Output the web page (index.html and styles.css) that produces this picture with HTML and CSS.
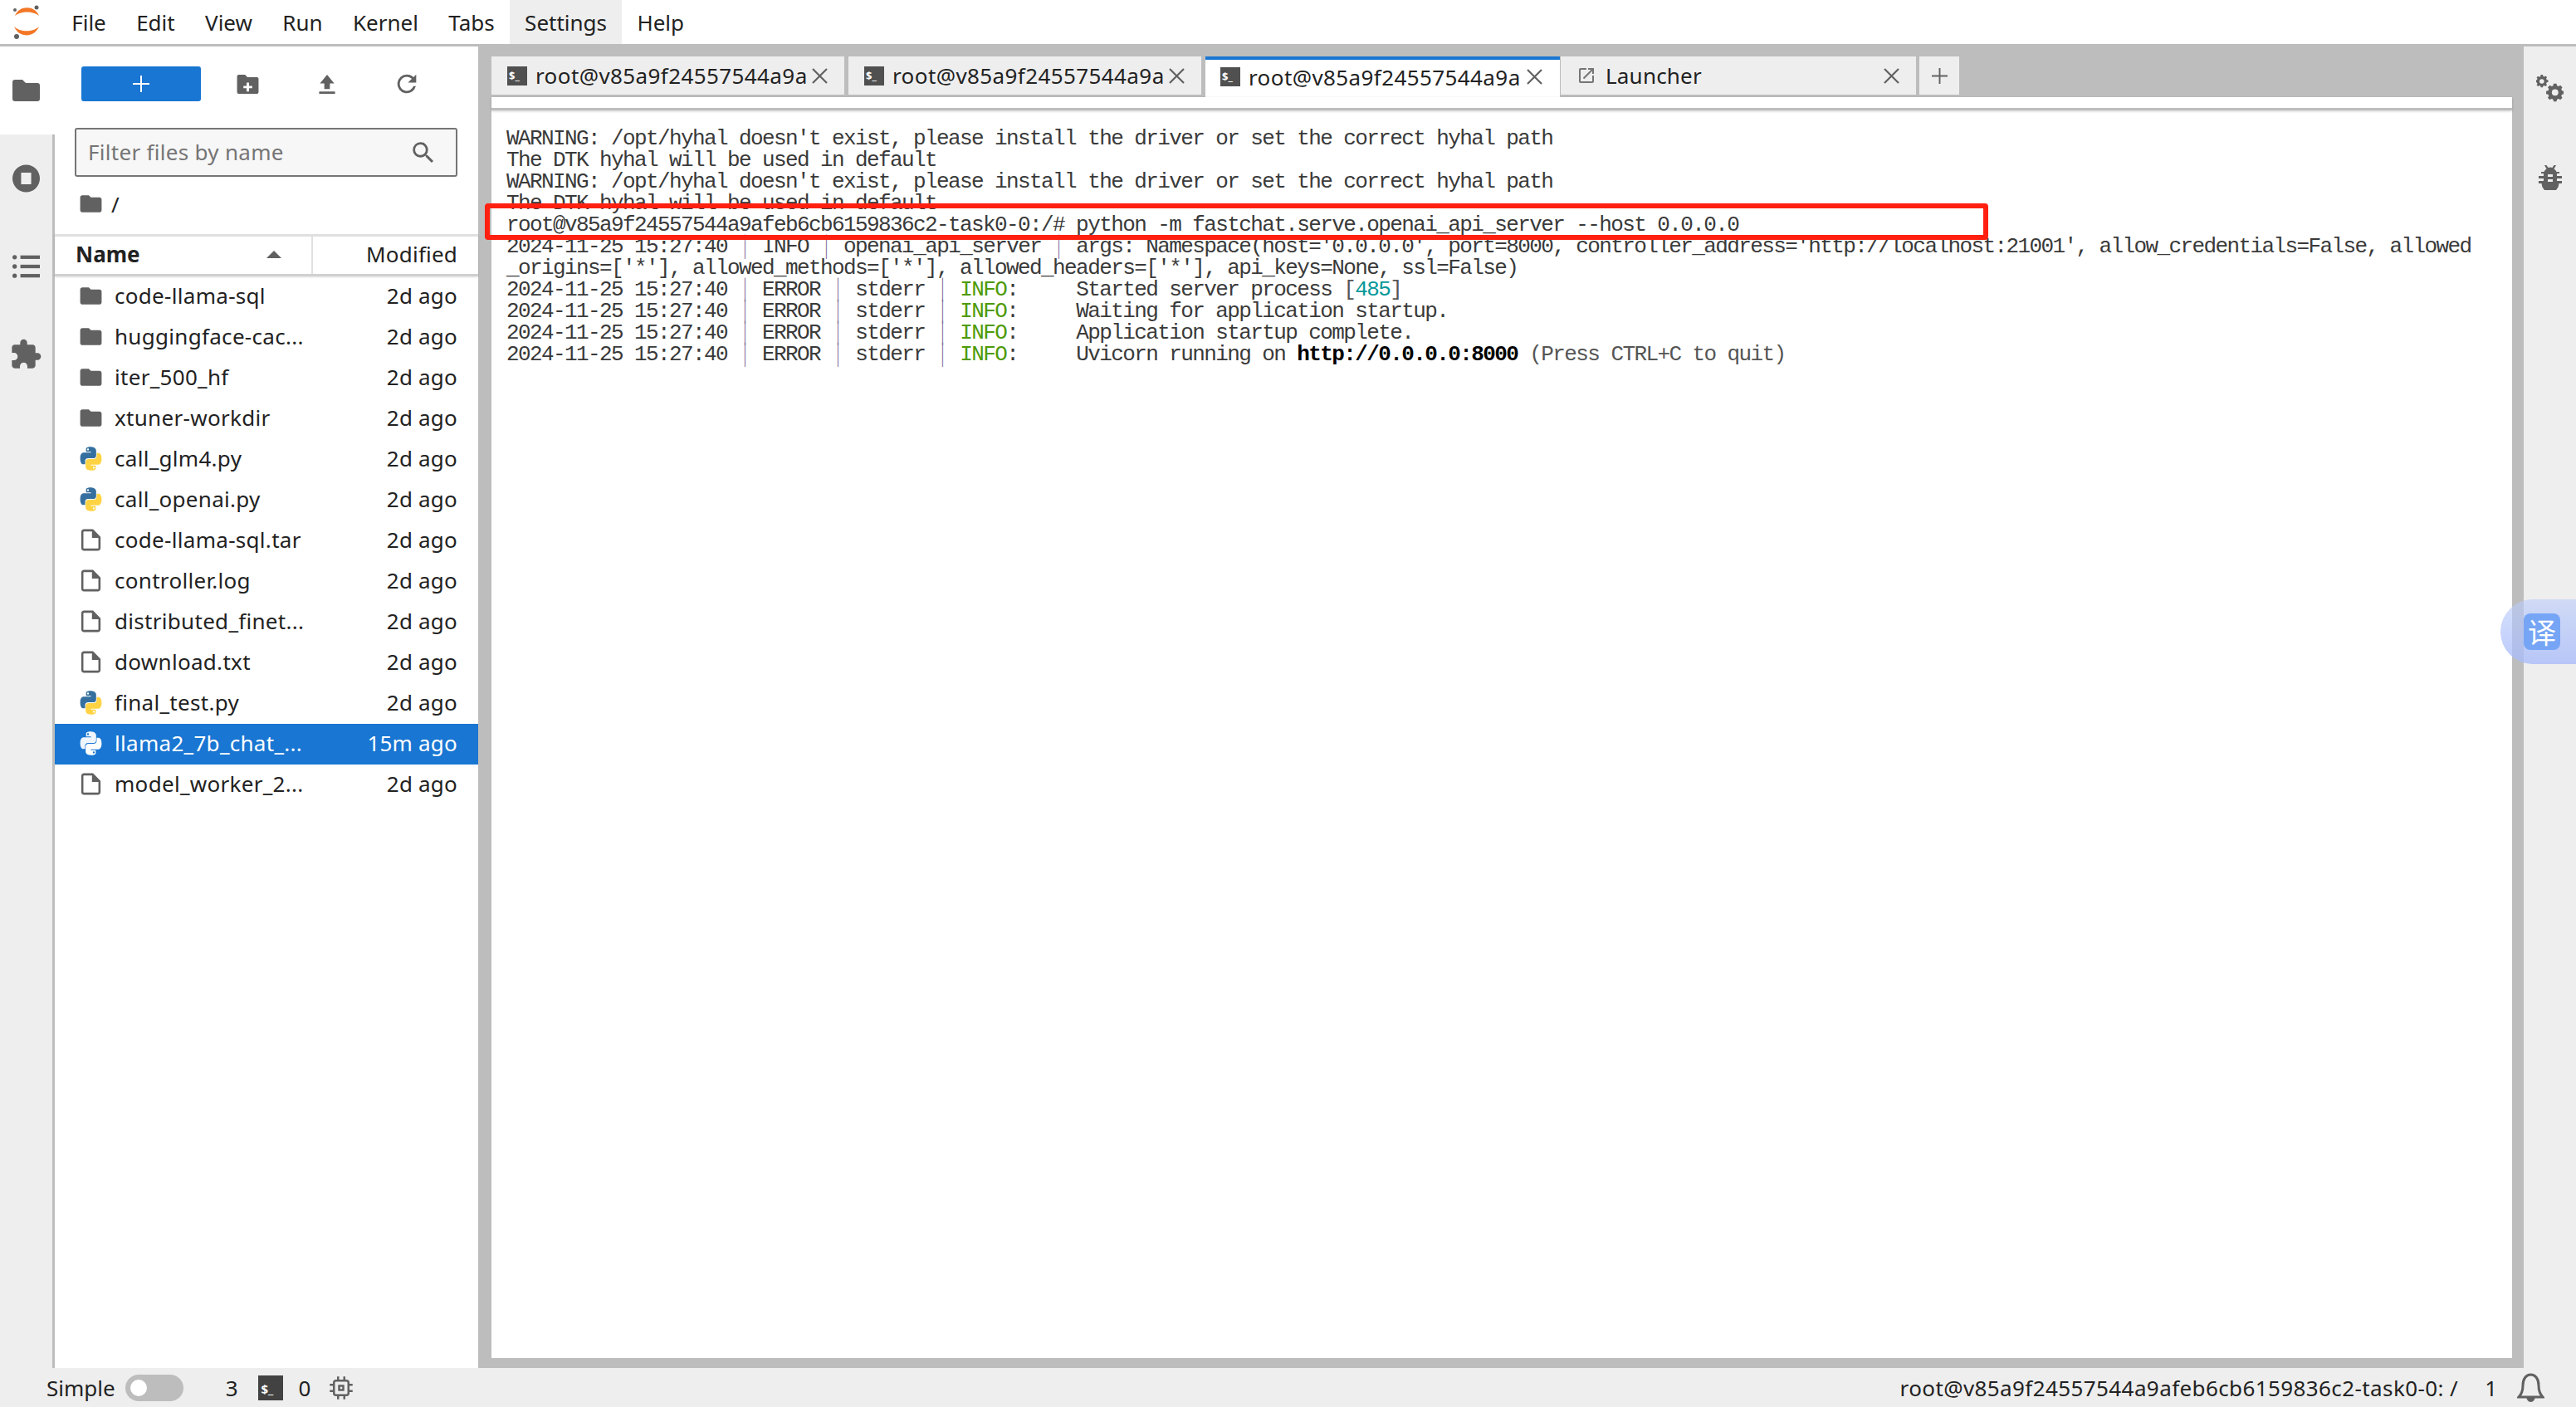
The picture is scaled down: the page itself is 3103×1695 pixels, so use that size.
FILE: index.html
```html
<!DOCTYPE html>
<html lang="en">
<head>
<meta charset="utf-8">
<title>JupyterLab</title>
<link rel="stylesheet" href="styles.css">
</head>
<body>
<svg class="defs" width="0" height="0" aria-hidden="true">
  <defs>
    <symbol id="i-folder" viewBox="0 0 24 24"><path d="M10 4H4c-1.100 0-2 .9-2 2v12c0 1.100.9 2 2 2h16c1.100 0 2-.9 2-2V8c0-1.100-.9-2-2-2h-8l-2-2z"/></symbol>
    <symbol id="i-file" viewBox="0 0 24 24"><path fill-rule="evenodd" d="M14 2H5.500C4.100 2 3 3.100 3 4.500v15C3 20.900 4.100 22 5.500 22h13c1.400 0 2.500-1.100 2.500-2.500V9l-7-7zm-8.500 18c-.3 0-.5-.2-.5-.5v-15c0-.3.200-.5.500-.5H13v6h6v9.500c0 .3-.2.500-.5.500h-13z"/></symbol>
    <symbol id="i-x" viewBox="0 0 19 19"><path d="M1 1l17 17M18 1L1 18"/></symbol>
    <symbol id="i-py" viewBox="0 0 24 24">
      <path class="py-a" d="M11.900 1C7.200 1 7.500 3 7.500 3v2.700h4.600v.7H5.300S2 6 2 11.800c0 5.700 2.900 5.500 2.900 5.500h1.700v-2.700s-.1-2.900 2.800-2.900h4.800s2.700 0 2.700-2.600V4.500S16.800 1 11.900 1zM9.300 2.600a.9.900 0 1 1 0 1.800.9.900 0 0 1 0-1.800z"/>
      <path class="py-b" d="M12.100 23c4.700 0 4.400-2 4.400-2v-2.700h-4.600v-.7h6.800s3.300.4 3.300-5.400c0-5.700-2.900-5.500-2.900-5.500h-1.700v2.700s.1 2.900-2.800 2.900H9.800s-2.700 0-2.700 2.600v4.400S6.700 23 12.100 23zm2.600-1.600a.9.9 0 1 1 0-1.800.9.9 0 0 1 0 1.800z"/>
    </symbol>
  </defs>
</svg>

<div class="app">
  <header class="topbar">
    <svg class="logo" viewBox="0 0 38 46">
      <path class="logo-arc" d="M5 16C10 3 29 3 34 16 27 10 12 10 5 16z"/>
      <path class="logo-arc" d="M4 29C10 43 28 43 34 29 27 36 11 36 4 29z"/>
      <circle class="logo-dot" cx="31" cy="6" r="2.500"/>
      <circle class="logo-dot" cx="5" cy="9" r="2"/>
      <circle class="logo-dot" cx="7" cy="41" r="3"/>
    </svg>
    <nav class="menu">
      <span class="menu-item">File</span>
      <span class="menu-item">Edit</span>
      <span class="menu-item">View</span>
      <span class="menu-item">Run</span>
      <span class="menu-item">Kernel</span>
      <span class="menu-item">Tabs</span>
      <span class="menu-item menu-active">Settings</span>
      <span class="menu-item">Help</span>
    </nav>
  </header>

  <div class="workspace">
    <aside class="rail">
      <div class="rail-tab rail-current">
        <svg class="rail-icon" viewBox="0 0 33 26"><path d="M3 0h9l4 4h14a3 3 0 0 1 3 3v16a3 3 0 0 1-3 3H3a3 3 0 0 1-3-3V3a3 3 0 0 1 3-3z"/></svg>
      </div>
      <div class="rail-tab">
        <svg class="rail-icon" viewBox="0 0 38 38"><path fill-rule="evenodd" d="M19 0a19 19 0 1 1 0 38 19 19 0 0 1 0-38zM12 11.500v15c0 .3.200.5.500.5h13c.3 0 .5-.2.500-.5v-15c0-.3-.2-.5-.5-.5h-13c-.3 0-.5.200-.5.500z"/></svg>
      </div>
      <div class="rail-tab">
        <svg class="rail-icon" viewBox="0 0 31 27"><circle cx="2.500" cy="3" r="2.500"/><circle cx="2.500" cy="13.500" r="2.500"/><circle cx="2.500" cy="24" r="2.500"/><rect x="9" y="1" width="22" height="4"/><rect x="9" y="11.500" width="22" height="4"/><rect x="9" y="22" width="22" height="4"/></svg>
      </div>
      <div class="rail-tab">
        <svg class="rail-icon rail-puzzle" viewBox="0 0 24 24"><path d="M20.500 11H19V7c0-1.100-.9-2-2-2h-4V3.500a2.500 2.500 0 0 0-5 0V5H4c-1.100 0-2 .9-2 2v3.800h1.500c1.500 0 2.700 1.200 2.700 2.700S5 16.200 3.500 16.200H2V20c0 1.100.9 2 2 2h3.800v-1.500c0-1.500 1.200-2.700 2.700-2.700s2.700 1.200 2.700 2.700V22H17c1.100 0 2-.9 2-2v-4h1.500a2.500 2.500 0 0 0 0-5z"/></svg>
      </div>
    </aside>

    <section class="browser">
      <div class="toolbar">
        <button class="new-btn"><svg class="plus" viewBox="0 0 20 20"><path d="M9 0h2v9h9v2h-9v9H9v-9H0V9h9z"/></svg></button>
        <svg class="tool tool-folder" viewBox="0 0 27 24"><path fill-rule="evenodd" d="M2 0h8l3 3h12a2 2 0 0 1 2 2v17a2 2 0 0 1-2 2H2a2 2 0 0 1-2-2V2a2 2 0 0 1 2-2zm10 10v4H8v3h4v4h3v-4h4v-3h-4v-4z"/></svg>
        <svg class="tool tool-upload" viewBox="0 0 20 24"><path d="M10 0l9 11h-5.500v7h-7v-7H1zM0 21h20v3H0z"/></svg>
        <svg class="tool tool-refresh" viewBox="0 0 24 24"><path d="M17.650 6.350A7.960 7.960 0 0 0 12 4a8 8 0 1 0 7.730 10h-2.080A6 6 0 1 1 12 6c1.660 0 3.140.69 4.220 1.780L13 11h7V4l-2.350 2.350z"/></svg>
      </div>
      <div class="filter">
        <span class="filter-text">Filter files by name</span>
        <svg class="filter-icon" viewBox="0 0 24 24"><path d="M15.500 14h-.79l-.28-.27A6.470 6.470 0 0 0 16 9.500 6.500 6.500 0 1 0 9.500 16c1.610 0 3.090-.59 4.230-1.570l.27.28v.79l5 4.990L20.490 19l-4.990-5zm-6 0C7.010 14 5 11.990 5 9.500S7.010 5 9.500 5 14 7.010 14 9.500 11.990 14 9.500 14z"/></svg>
      </div>
      <div class="crumbs">
        <svg class="row-icon folder"><use href="#i-folder"/></svg>
        <span>/</span>
      </div>
      <div class="list-head">
        <div class="head-name"><span>Name</span><span class="sort"></span></div>
        <div class="head-mod">Modified</div>
      </div>
      <ul class="list">
        <li class="row"><svg class="row-icon folder"><use href="#i-folder"/></svg><span class="row-name">code-llama-sql</span><span class="row-time">2d ago</span></li>
        <li class="row"><svg class="row-icon folder"><use href="#i-folder"/></svg><span class="row-name">huggingface-cac...</span><span class="row-time">2d ago</span></li>
        <li class="row"><svg class="row-icon folder"><use href="#i-folder"/></svg><span class="row-name">iter_500_hf</span><span class="row-time">2d ago</span></li>
        <li class="row"><svg class="row-icon folder"><use href="#i-folder"/></svg><span class="row-name">xtuner-workdir</span><span class="row-time">2d ago</span></li>
        <li class="row"><svg class="row-icon"><use href="#i-py"/></svg><span class="row-name">call_glm4.py</span><span class="row-time">2d ago</span></li>
        <li class="row"><svg class="row-icon"><use href="#i-py"/></svg><span class="row-name">call_openai.py</span><span class="row-time">2d ago</span></li>
        <li class="row"><svg class="row-icon file"><use href="#i-file"/></svg><span class="row-name">code-llama-sql.tar</span><span class="row-time">2d ago</span></li>
        <li class="row"><svg class="row-icon file"><use href="#i-file"/></svg><span class="row-name">controller.log</span><span class="row-time">2d ago</span></li>
        <li class="row"><svg class="row-icon file"><use href="#i-file"/></svg><span class="row-name">distributed_finet...</span><span class="row-time">2d ago</span></li>
        <li class="row"><svg class="row-icon file"><use href="#i-file"/></svg><span class="row-name">download.txt</span><span class="row-time">2d ago</span></li>
        <li class="row"><svg class="row-icon"><use href="#i-py"/></svg><span class="row-name">final_test.py</span><span class="row-time">2d ago</span></li>
        <li class="row row-selected"><svg class="row-icon"><use href="#i-py"/></svg><span class="row-name">llama2_7b_chat_...</span><span class="row-time">15m ago</span></li>
        <li class="row"><svg class="row-icon file"><use href="#i-file"/></svg><span class="row-name">model_worker_2...</span><span class="row-time">2d ago</span></li>
      </ul>
    </section>

    <main class="main">
      <div class="tabbar">
        <div class="tab"><span class="term-icon">$_</span><span class="tab-label">root@v85a9f24557544a9a</span><svg class="tab-x"><use href="#i-x"/></svg></div>
        <div class="tab"><span class="term-icon">$_</span><span class="tab-label">root@v85a9f24557544a9a</span><svg class="tab-x"><use href="#i-x"/></svg></div>
        <div class="tab tab-current"><span class="term-icon">$_</span><span class="tab-label">root@v85a9f24557544a9a</span><svg class="tab-x"><use href="#i-x"/></svg></div>
        <div class="tab tab-launcher">
          <svg class="launch-icon" viewBox="0 0 24 24"><path d="M19 19H5V5h7V3H5a2 2 0 0 0-2 2v14a2 2 0 0 0 2 2h14a2 2 0 0 0 2-2v-7h-2v7zM14 3v2h3.600l-9.800 9.800 1.400 1.400L19 6.400V10h2V3h-7z"/></svg>
          <span class="tab-label">Launcher</span><svg class="tab-x"><use href="#i-x"/></svg>
        </div>
        <div class="tab-add"><svg class="add-icon" viewBox="0 0 20 20"><path d="M9 0h2v9h9v2h-9v9H9v-9H0V9h9z"/></svg></div>
      </div>
      <div class="term-strip"></div>
      <div class="terminal">
<pre class="term-text">WARNING: /opt/hyhal doesn't exist, please install the driver or set the correct hyhal path
The DTK hyhal will be used in default
WARNING: /opt/hyhal doesn't exist, please install the driver or set the correct hyhal path
The DTK hyhal will be used in default
root@v85a9f24557544a9afeb6cb6159836c2-task0-0:/# python -m fastchat.serve.openai_api_server --host 0.0.0.0
2024-11-25 15:27:40 <span class="bar">│</span> INFO <span class="bar">│</span> openai_api_server <span class="bar">│</span> args: Namespace(host='0.0.0.0', port=8000, controller_address='http://localhost:21001', allow_credentials=False, allowed
_origins=['*'], allowed_methods=['*'], allowed_headers=['*'], api_keys=None, ssl=False)
2024-11-25 15:27:40 <span class="bar">│</span> ERROR <span class="bar">│</span> stderr <span class="bar">│</span> <span class="green">INFO</span>:     Started server process <span class="dim">[</span><span class="teal">485</span><span class="dim">]</span>
2024-11-25 15:27:40 <span class="bar">│</span> ERROR <span class="bar">│</span> stderr <span class="bar">│</span> <span class="green">INFO</span>:     Waiting for application startup.
2024-11-25 15:27:40 <span class="bar">│</span> ERROR <span class="bar">│</span> stderr <span class="bar">│</span> <span class="green">INFO</span>:     Application startup complete.
2024-11-25 15:27:40 <span class="bar">│</span> ERROR <span class="bar">│</span> stderr <span class="bar">│</span> <span class="green">INFO</span>:     Uvicorn running on <b class="strong">http://0.0.0.0:8000</b> <span class="dim">(Press CTRL+C to quit)</span></pre>
        <div class="highlight"></div>
      </div>
    </main>

    <aside class="rail-right">
      <svg class="right-icon" viewBox="0 0 33 34"><g fill-rule="evenodd"><path d="M7 0h3l.5 2.300 1.700.7 2-1.200 2.100 2.100-1.200 2 .7 1.700 2.300.5v3l-2.300.5-.7 1.700 1.200 2-2.100 2.100-2-1.200-1.700.7-.5 2.300H7l-.5-2.300-1.700-.7-2 1.200L.7 15.600l1.200-2-.7-1.700L-1 11.400v-3l2.200-.5.7-1.700-1.200-2 2.100-2.100 2 1.200 1.700-.7zM8.500 6.500a3.500 3.500 0 1 0 0 7 3.500 3.500 0 0 0 0-7z" transform="translate(0 -1) scale(.8)"/><path d="M20.500 10h4l.6 2.800 2.200.9 2.400-1.500 2.800 2.800-1.500 2.400.9 2.200 2.800.6v4l-2.800.6-.9 2.200 1.500 2.400-2.800 2.800-2.400-1.500-2.200.9-.6 2.800h-4l-.6-2.800-2.200-.9-2.400 1.500-2.800-2.800 1.500-2.400-.9-2.200-2.800-.6v-4l2.800-.6.9-2.200-1.500-2.400 2.800-2.800 2.400 1.500 2.200-.9zM22.500 17.500a4.500 4.500 0 1 0 0 9 4.500 4.500 0 0 0 0-9z" transform="translate(3 1) scale(.88)"/></g></svg>
      <svg class="right-icon right-bug" viewBox="0 0 28 30"><path fill-rule="evenodd" d="M7 0l2.500 0 2 3a8 8 0 0 1 5 0l2-3H21l-2.500 4.500c1.300.8 2.400 2 3 3.500H25v2h-3v3h6v3h-6v3h6v3h-3.500a9 9 0 0 1-21 0H0v-3h6v-3H0v-3h6v-3H3V8h3.500c.6-1.500 1.700-2.700 3-3.500zM11 11v3h6v-3zm0 6v3h6v-3z"/></svg>
    </aside>
  </div>

  <footer class="status">
    <div class="status-left">
      <span>Simple</span>
      <span class="switch"><span class="knob"></span></span>
      <span class="count">3</span>
      <span class="term-icon term-icon-lg">$_</span>
      <span class="count">0</span>
      <svg class="chip" viewBox="0 0 24 24"><path fill-rule="evenodd" d="M8 1h2v3h4V1h2v3h1a3 3 0 0 1 3 3v1h3v2h-3v4h3v2h-3v1a3 3 0 0 1-3 3h-1v3h-2v-3h-4v3H8v-3H7a3 3 0 0 1-3-3v-1H1v-2h3v-4H1V8h3V7a3 3 0 0 1 3-3h1zM7 6a1 1 0 0 0-1 1v10a1 1 0 0 0 1 1h10a1 1 0 0 0 1-1V7a1 1 0 0 0-1-1zm2 3h6v6H9zm2 2v2h2v-2z"/></svg>
    </div>
    <div class="status-right">
      <span class="status-path">root@v85a9f24557544a9afeb6cb6159836c2-task0-0: /</span>
      <span class="bell-count">1</span>
      <svg class="bell" viewBox="0 0 33 36"><path fill="none" stroke-width="3" d="M2 29c3-3 5-6 5-14C7 7 11 2 16.500 2S26 7 26 15c0 8 2 11 5 14z"/><path d="M12 30h9a4.500 4.500 0 0 1-9 0z"/></svg>
    </div>
  </footer>

  <div class="translate"><span class="translate-icon">译</span></div>
</div>
</body>
</html>
```

FILE: styles.css
```css
* { box-sizing: border-box; }
html, body { margin: 0; padding: 0; height: 100%; overflow: hidden; }
body { font-family: "Noto Sans", "Open Sans", sans-serif; font-size: 26px; color: #222; background: #fff; }
.defs { position: absolute; }
.app { width: 3103px; height: 1695px; display: flex; flex-direction: column; position: relative; overflow: hidden; }

/* top bar */
.topbar { height: 56px; flex: none; display: flex; align-items: stretch; background: #fff; border-bottom: 3px solid #bdbdbd; }
.logo { width: 38px; height: 46px; margin: 3px 0 0 13px; flex: none; }
.logo-arc { fill: #f37726; }
.logo-dot { fill: #616161; }
.menu { display: flex; margin-left: 17px; }
.menu-item { padding: 0 18.2px; line-height: 55px; height: 53px; }
.menu-active { background: #eee; }

.workspace { flex: 1; display: flex; min-height: 0; background: #bdbdbd; }

/* left rail */
.rail { width: 66px; flex: none; background: #eee; border-right: 3px solid #bdbdbd; display: flex; flex-direction: column; }
.rail-tab { height: 106px; display: flex; align-items: center; justify-content: center; padding-right: 1px; }
.rail-current { background: #fff; margin-right: -3px; padding-right: 4px; }
.rail-icon { fill: #616161; width: 33px; height: 38px; }
.rail-puzzle { width: 40px; height: 40px; }

/* file browser */
.browser { width: 510px; flex: none; background: #fff; display: flex; flex-direction: column; }
.toolbar { display: flex; align-items: center; height: 98px; padding: 0 0 8px 32px; flex: none; }
.new-btn { width: 144px; height: 42px; background: #1976d2; border: 0; border-radius: 3px; display: flex; align-items: center; justify-content: center; padding: 0; }
.plus { width: 20px; height: 20px; fill: #fff; }
.tool { fill: #616161; flex: none; }
.tool-folder { width: 27px; height: 23px; margin-left: 43px; }
.tool-upload { width: 20px; height: 23px; margin-left: 72px; }
.tool-refresh { width: 34px; height: 34px; margin-left: 69px; }
.filter { margin: 0 25px 0 24px; height: 59px; flex: none; border: 2px solid #757575; border-radius: 3px; background: #f7f7f7; display: flex; align-items: center; justify-content: space-between; padding: 0 22px 2px 14px; }
.filter-text { color: #757575; letter-spacing: .3px; }
.filter-icon { width: 34px; height: 34px; fill: #616161; margin-top: 2px; }
.crumbs { height: 69px; flex: none; padding: 0 0 4px 28px; display: flex; align-items: center; gap: 9px; }
.list-head { height: 51px; flex: none; display: flex; align-items: center; border-top: 3px solid #e0e0e0; border-bottom: 3px solid #d0d0d0; box-shadow: 0 1px 2px rgba(0,0,0,.12); }
.head-name { width: 311px; height: 100%; padding: 0 36px 3px 25px; display: flex; align-items: center; justify-content: space-between; font-weight: 700; border-right: 2px solid #e0e0e0; }
.sort { width: 0; height: 0; border-left: 9px solid transparent; border-right: 9px solid transparent; border-bottom: 9px solid #616161; }
.head-mod { flex: 1; text-align: right; padding: 0 25px 3px 0; letter-spacing: .2px; }
.list { list-style: none; margin: 0; padding: 0; }
.row { height: 49px; display: flex; align-items: center; padding: 0 25px 3px 28px; }
.row-icon { width: 31px; height: 31px; flex: none; }
.folder { fill: #616161; }
.file { fill: #616161; }
.py-a { fill: var(--py-a, #356f9f); }
.py-b { fill: var(--py-b, #ffd343); }
.row-name { margin-left: 13px; flex: 1; white-space: nowrap; overflow: hidden; letter-spacing: .3px; }
.row-time { flex: none; letter-spacing: .2px; }
.row-selected { background: #1976d2; color: #fff; --py-a: #eef5fc; --py-b: #fff; }

/* main */
.main { flex: none; width: 2464px; padding: 12px 14px 12px 16px; display: flex; flex-direction: column; }
.tabbar { height: 49px; display: flex; flex: none; }
.tab { width: 428px; height: 49px; background: #eee; border-right: 3px solid #bdbdbd; border-bottom: 3px solid #bdbdbd; display: flex; align-items: center; padding: 0 20px 0 19px; margin-right: 2px; }
.tab-current { width: 427px; background: #fff; border-top: 4px solid #1976d2; border-bottom: 0; border-right: 0; padding: 0 21px 4px 18px; margin-right: 1px; }
.tab-launcher { width: 431px; margin-right: 1px; }
.term-icon { width: 24px; height: 23px; flex: none; background: #505050; color: #fff; font-size: 13px; font-weight: 700; line-height: 23px; padding-left: 2px; }
.term-icon-lg { width: 30px; height: 30px; font-size: 15px; line-height: 32px; padding-left: 4px; background: #424242; }
.tab-label { margin-left: 10px; flex: 1; white-space: nowrap; letter-spacing: .4px; }
.tab-x { width: 19px; height: 19px; flex: none; fill: none; stroke: #616161; stroke-width: 2.2; }
.launch-icon { width: 24px; height: 26px; fill: #757575; flex: none; }
.tab-launcher .tab-label { margin-left: 11px; letter-spacing: .2px; }
.tab-add { width: 48px; height: 49px; background: #eee; border-bottom: 3px solid #bdbdbd; display: flex; align-items: center; justify-content: center; }
.add-icon { width: 19px; height: 19px; fill: #616161; }
.term-strip { height: 16px; background: #fff; border-bottom: 3px solid #bdbdbd; box-shadow: 0 1px 3px rgba(0,0,0,.2); flex: none; z-index: 1; }
.terminal { flex: 1; background: #fff; position: relative; padding: 21px 0 0 18px; }
.term-text { margin: 0; font-family: "Liberation Mono", monospace; font-size: 26px; line-height: 26px; letter-spacing: -1.6px; color: #3a3a3a; white-space: pre; }
.bar { display: inline-block; transform: scaleX(.5); color: #7d5f90; }
.green { color: #4e9a06; }
.teal { color: #06989a; }
.dim { color: #555; }
.strong { color: #000; font-weight: 700; }
.highlight { position: absolute; left: -8px; top: 112px; width: 1811px; height: 44px; border: 6px solid #ff2010; border-radius: 4px; }

/* right rail */
.rail-right { flex: 1; background: #eee; display: flex; flex-direction: column; align-items: center; padding-top: 34px; gap: 73px; }
.right-icon { width: 33px; height: 36px; fill: #616161; flex: none; }
.right-bug { width: 28px; height: 30px; }

/* status bar */
.status { height: 47px; flex: none; background: #eee; display: flex; justify-content: space-between; align-items: center; padding: 0 38px 0 56px; }
.status-left, .status-right { display: flex; align-items: center; }
.switch { width: 70px; height: 32px; margin-left: 12px; border-radius: 16px; background: #bdbdbd; padding: 6px; display: flex; }
.knob { width: 20px; height: 20px; border-radius: 50%; background: #fff; }
.count { margin-left: 51px; }
.term-icon-lg { margin-left: 24px; }
.term-icon-lg + .count { margin-left: 19px; }
.chip { width: 30px; height: 30px; fill: #616161; margin-left: 22px; }
.status-path { letter-spacing: .4px; }
.bell-count { margin-left: 32px; }
.bell { width: 33px; height: 36px; margin-left: 24px; stroke: #616161; fill: #616161; }

/* translate widget */
.translate { position: absolute; left: 3012px; top: 722px; width: 100px; height: 78px; border-radius: 39px 0 0 39px; background: linear-gradient(rgba(188,205,251,.6), rgba(170,188,250,.8)); display: flex; align-items: center; padding-left: 28px; }
.translate-icon { width: 44px; height: 44px; border-radius: 8px; background: #76a5f5; color: #fff; font-family: "Noto Sans CJK SC", sans-serif; font-size: 34px; line-height: 44px; text-align: center; }
```
